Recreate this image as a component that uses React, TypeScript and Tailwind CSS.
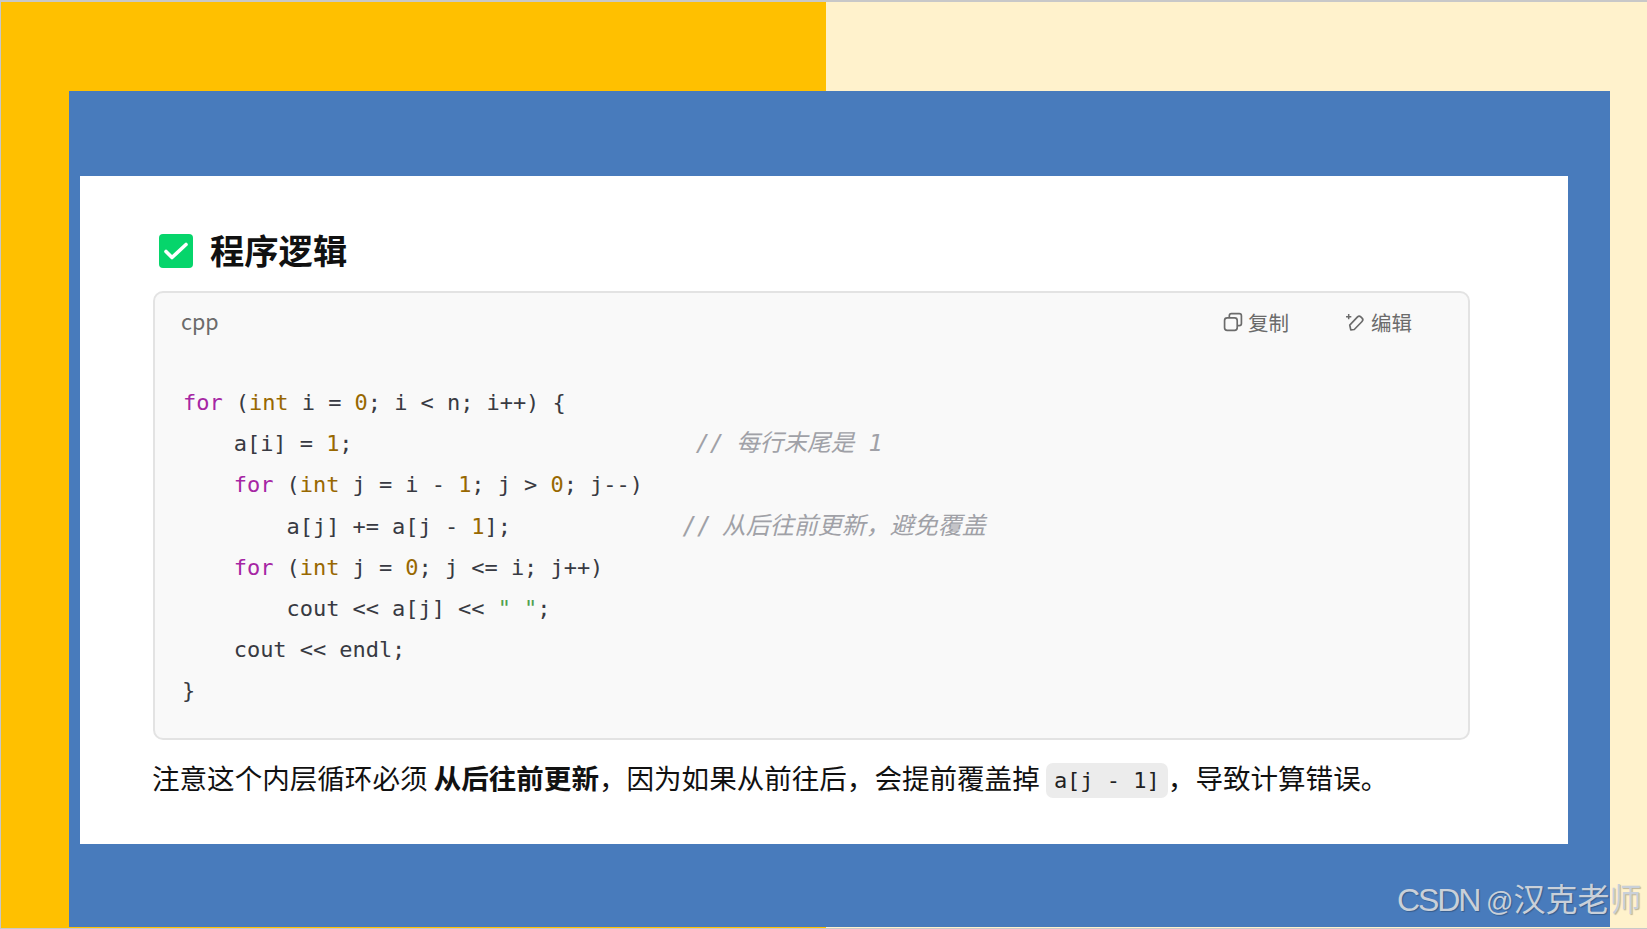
const mono = "font-['DejaVu_Sans_Mono','Noto_Sans_CJK_SC',monospace]";

function Kw({ children }: { children: string }) {
  return <span className="text-[#a626a4]">{children}</span>;
}
function Ty({ children }: { children: string }) {
  return <span className="text-[#986801]">{children}</span>;
}

function CopyIcon() {
  return (
    <svg width="20" height="20" viewBox="0 0 19 19" fill="none" stroke="#6b6b6b" strokeWidth="1.6">
      <rect x="1.5" y="5.5" width="12" height="12" rx="2.5" />
      <path d="M6 5.5V3.5a2 2 0 0 1 2-2h7.5a2 2 0 0 1 2 2V11a2 2 0 0 1-2 2h-2" />
    </svg>
  );
}

function EditIcon() {
  return (
    <svg width="20" height="20" viewBox="0 0 19 19" fill="none" stroke="#6b6b6b" strokeWidth="1.6" strokeLinejoin="round">
      <path d="M5.5 17l-1-4.6 7.4-7.7a2.2 2.2 0 0 1 3.1 0l1.2 1.2a2.2 2.2 0 0 1 0 3.1l-7.4 7.6z" />
      <path d="M1 4.5h5M3.5 2v5" strokeWidth="1.4" />
    </svg>
  );
}

export default function App() {
  return (
    <div className="relative w-[1647px] h-[929px] overflow-hidden bg-[#c8c8c8] pl-px pt-[2px] pb-px font-['Noto_Sans_CJK_SC',sans-serif]">
      <div className="h-full pl-[68px] pr-[37px] pt-[89px] pb-px bg-[linear-gradient(to_right,#ffc000_825px,#fff2cc_825px)]">
        <div className="h-full bg-[#487bbc] pl-[11px] pr-[42px] pt-[85px]">
          <div className="h-[668px] bg-white pl-[73px] pr-[98px] pt-[50px]">
            <div className="flex items-center h-[48px] pl-[6px] gap-[17px]">
              <div className="w-[34px] h-[34px] mt-[2px] rounded-[4px] bg-[#06d56b]">
                <svg width="34" height="34" viewBox="0 0 34 34" fill="none" stroke="white" strokeWidth="3.6" strokeLinecap="round" strokeLinejoin="round">
                  <path d="M7 17.5l6 6L27 10.5" />
                </svg>
              </div>
              <h1 className="-mt-[2px] text-[34.3px] leading-none font-bold text-[#111]">程序逻辑</h1>
            </div>

            <div className="mt-[17px] h-[449px] rounded-[10px] border-2 border-[#e3e3e3] bg-[#f9f9f9]">
              <div className="flex items-center justify-between h-[56px] pl-[26px] pr-[56px] text-[#6b6b6b]">
                <span className="text-[21.5px]">cpp</span>
                <div className="flex items-center gap-[56px] pt-[2px] text-[20.5px]">
                  <span className="flex items-center gap-[5px]"><CopyIcon />复制</span>
                  <span className="flex items-center gap-[6px]"><EditIcon />编辑</span>
                </div>
              </div>
              <pre className={`${mono} mt-[33px] pl-[28px] text-[22px] leading-[41.2px] tracking-[-0.05px] text-[#383a42]`}>
                <div><Kw>for</Kw> (<Ty>int</Ty> i = <Ty>0</Ty>; i &lt; n; i++) {"{"}</div>
                <div className="-ml-[2px]">
                  {"    a[i] = "}<Ty>1</Ty>{";                          "}
                  <span className="text-[#a0a1a7] italic text-[23.6px] tracking-normal">// <span className="-ml-[2px]">每行末尾是 1</span></span>
                </div>
                <div className="-ml-[2px]">{"    "}<Kw>for</Kw> (<Ty>int</Ty> j = i - <Ty>1</Ty>; j &gt; <Ty>0</Ty>; j--)</div>
                <div className="-ml-[2px]">
                  {"        a[j] += a[j - "}<Ty>1</Ty>{"];             "}
                  <span className="text-[#a0a1a7] italic text-[24px] tracking-normal">// <span className="-ml-[4px]">从后往前更新，避免覆盖</span></span>
                </div>
                <div className="-ml-[2px]">{"    "}<Kw>for</Kw> (<Ty>int</Ty> j = <Ty>0</Ty>; j &lt;= i; j++)</div>
                <div className="-ml-[2px]">{"        cout << a[j] << "}<span className="text-[#50a14f]">" "</span>;</div>
                <div className="-ml-[2px]">{"    cout << endl;"}</div>
                <div className="-ml-px">{"}"}</div>
              </pre>
            </div>

            <p className="mt-[18px] -ml-px text-[27.55px] leading-[38px] text-[#111] whitespace-nowrap">
              注意这个内层循环必须 <strong className="font-bold">从后往前更新</strong>，因为如果从前往后，会提前覆盖掉{" "}
              <code className={`${mono} inline-block align-middle -translate-y-[1px] h-[35px] leading-[35px] px-[8px] rounded-[7px] bg-[#ececec] text-[22px] text-[#222]`}>a[j - 1]</code>
              ，导致计算错误。
            </p>
          </div>
        </div>
      </div>
      <div className="absolute left-[1397px] top-[880px] text-[32px] leading-[40px] text-[#c9d0d9] whitespace-nowrap font-['Liberation_Sans','Noto_Sans_CJK_SC',sans-serif] [text-shadow:1px_1px_1px_rgba(0,0,0,0.25)]">
        <span className="tracking-[-2.1px]">CSDN </span><span className="text-[27px]">@</span>汉克老师
      </div>
    </div>
  );
}
